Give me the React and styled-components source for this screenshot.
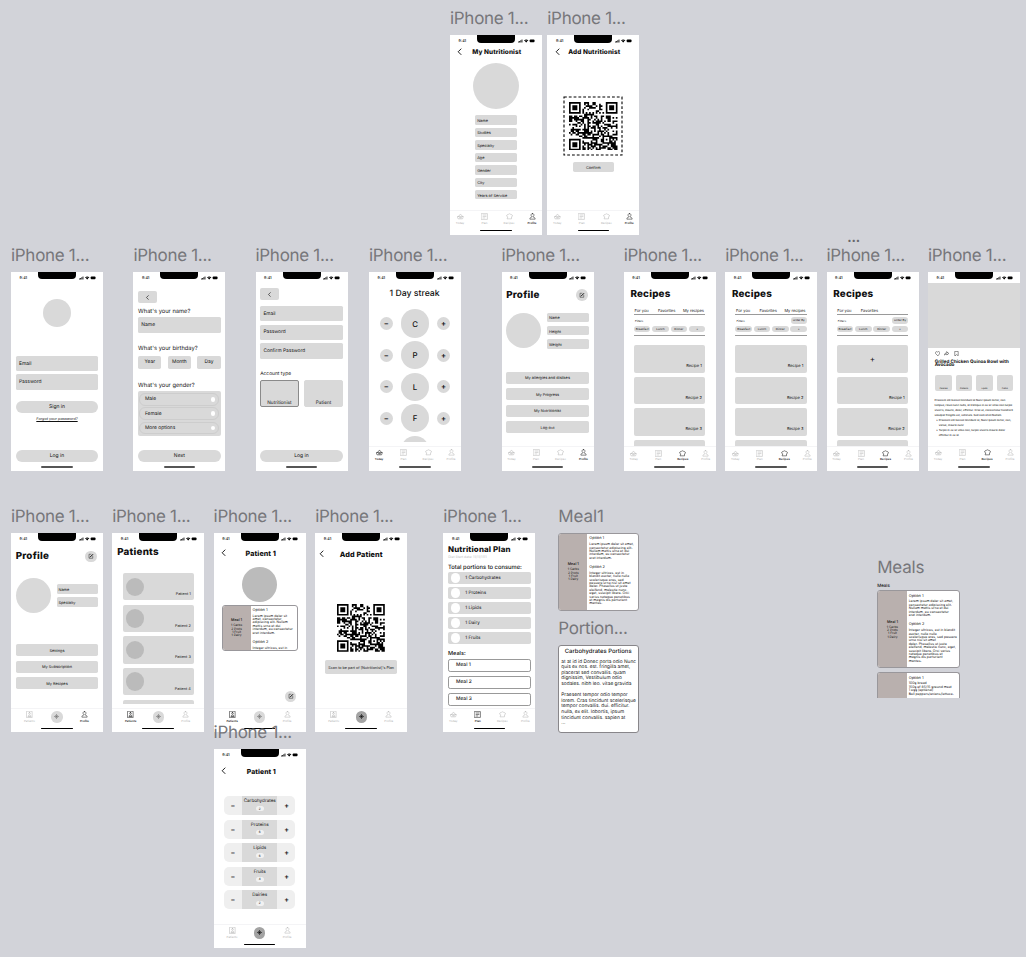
import React from 'react';
import styled, { createGlobalStyle, css } from 'styled-components';

const GlobalStyle = createGlobalStyle`
  * { box-sizing: border-box; }
  body { margin: 0; background: #d2d3d9; font-family: Inter, "Liberation Sans", sans-serif; color: #111; text-rendering: geometricPrecision; }
`;

const center = css`display: flex; align-items: center; justify-content: center;`;

/* ---------- canvas ---------- */
const Canvas = styled.main`
  position: relative; width: 1026px; height: 957px; overflow: hidden; background: #d2d3d9;
`;
const Artboard = styled.section`
  position: absolute; left: ${p => p.$x}px; top: ${p => p.$y - 28}px;
`;
const BoardLabel = styled.h2`
  margin: 0 0 5px; padding-top: 1px; height: 23px; font-size: 17px; line-height: 22px; font-weight: 400;
  letter-spacing: ${p => p.$ls ?? -0.3}px; color: #77777b; white-space: nowrap;
`;
const More = styled.div`
  position: absolute; left: 847px; top: 231px; font-size: 17px; line-height: 12px; height: 12px; letter-spacing: -0.7px; color: #66666a;
`;
const Screen = styled.div`
  width: 92px; height: 199.3px; background: #fff; display: flex; flex-direction: column; overflow: hidden;
`;
const Body = styled.div`
  flex: 1; min-height: 0; overflow: hidden; display: flex; flex-direction: column;
  align-items: ${p => p.$align || 'stretch'};
  padding: 0 ${p => p.$px ?? 4.7}px; margin-bottom: ${p => p.$mb ?? 0}px;
`;

/* ---------- status bar ---------- */
const StatusRow = styled.div`
  flex: none; height: 10px; display: grid; grid-template-columns: 27px 38px 27px; align-items: start;
`;
const Clock = styled.span`
  font-size: 3.7px; font-weight: 600; line-height: 4px; margin: 4px 0 0 8.6px;
`;
const Notch = styled.div`height: 7.8px; background: #000; border-radius: 0 0 4px 4px;`;
const Signals = styled.svg`width: 17px; height: 4px; margin: 4.1px 0 0 2.5px; display: block;`;

const StatusBar = () => (
  <StatusRow>
    <Clock>9:41</Clock>
    <Notch />
    <Signals viewBox="0 0 17 4">
      <path d="M0 3.4V2.5h.8v.9zM1.2 3.4V1.9H2v1.5zM2.4 3.4V1.2h.8v2.2zM3.6 3.4V.5h.8v2.9z" />
      <path d="M6 1.4a3.3 3.3 0 0 1 4.4 0l-.6.7a2.4 2.4 0 0 0-3.2 0zM7 2.4a1.7 1.7 0 0 1 2.4 0L8.2 3.6z" />
      <rect x="11.7" y=".5" width="4.8" height="2.8" rx=".8" />
    </Signals>
  </StatusRow>
);

/* ---------- icons ---------- */
const Glyph = styled.svg`
  display: block; flex: none; width: ${p => p.$s || 6}px; height: ${p => p.$s || 6}px;
  fill: none; stroke: currentColor; stroke-width: ${p => p.$sw || 2}; stroke-linecap: round; stroke-linejoin: round;
`;
const ICONS = {
  today: <path d="M2 12h20l-3 8H5zM5 12c0-3 2-4 4-4 0-4 6-4 6 0 2 0 4 1 4 4M9 15v2M12 15v2M15 15v2" />,
  plan: <path d="M2 2h20v20H2zM7 7h10M7 12h10M7 17h6" />,
  recipes: <path d="M5 13C-.5 12 1 5 7 6c1-4.500 9-4.500 10 0 6-1 7.500 6 2 7v7H5z" />,
  profile: <path d="M12 2a4.800 4.800 0 0 1 2.500 9v3c4.500.5 6.500 3 6.500 7H3c0-4 2-6.500 6.500-7v-3A4.800 4.800 0 0 1 12 2z" />,
  patients: <path d="M3 1h18v22H3zM12 5a3 3 0 1 1 0 6 3 3 0 0 1 0-6zM7 17c0-5 10-5 10 0zM7 20h10" />,
  back: <path d="M16 3 7 12l9 9" />,
  edit: <><path d="M12 5H4v16h15v-8" /><path d="M9 16 19 6" strokeWidth="4" /></>,
  heart: <path d="M12 21 3 12a5.500 5.500 0 0 1 9-7 5.500 5.500 0 0 1 9 7z" />,
  share: <path d="M13 4l9 7-9 7v-4c-5 0-9 1-11 5 0-7 4-11 11-11z" />,
  bookmark: <path d="M5 2h14v20l-7-6-7 6z" />,
  scan: <path d="M12 2v20M2 12h20M7 7l10 10M17 7 7 17" />,
};
const Icon = ({ name, s, sw }) => <Glyph viewBox="0 0 24 24" $s={s} $sw={sw}>{ICONS[name]}</Glyph>;

/* ---------- footer ---------- */
const HomeArea = styled.div`
  flex: none; height: ${p => p.$h ?? 5}px; display: flex; justify-content: center; align-items: flex-end; padding-bottom: 3.2px;
`;
const HomeBar = styled.div`
  width: 31.600px; height: ${p => (p.$soft ? 2 : 1.3)}px; border-radius: 1px; background: ${p => (p.$soft ? '#555' : '#000')};
`;
const Tabs = styled.nav`
  flex: none; height: 17.6px; border-top: 1px solid #f4f4f6; padding: 2.4px 0 0 ${p => (p.$pro ? 6.500 : 0)}px; display: grid;
  grid-template-columns: ${p => (p.$pro ? '24px 31px 24px' : '20px 29px 20px 26px')};
`;
const TabItem = styled.div`
  display: flex; flex-direction: column; align-items: center; gap: 0.9px;
  color: ${p => (p.$on ? '#222' : '#b0b0b0')};
`;
const TabLabel = styled.span`font-size: 2.9px; line-height: 4px; font-weight: ${p => (p.$on ? 600 : 400)};`;
const AddTab = styled.div`
  ${center}; justify-self: center; width: 11.300px; height: 11.300px; margin-top: 0.2px; border-radius: 50%;
  background: ${p => (p.$on ? '#a3a3a3' : '#d9d9d9')}; color: ${p => (p.$on ? '#111' : '#777')};
`;
const Tab = ({ icon, label, on }) => (
  <TabItem $on={on}>
    <Icon name={icon} s={7} sw={on ? 1.9 : 1.6} />
    <TabLabel $on={on}>{label}</TabLabel>
  </TabItem>
);
const Footer = ({ on, soft }) => (
  <>
    <Tabs>
      <Tab icon="today" label="Today" on={on === 'today'} />
      <Tab icon="plan" label="Plan" on={on === 'plan'} />
      <Tab icon="recipes" label="Recipes" on={on === 'recipes'} />
      <Tab icon="profile" label="Profile" on={on === 'profile'} />
    </Tabs>
    <HomeArea $h={7.2}><HomeBar $soft={soft} /></HomeArea>
  </>
);
const ProFooter = ({ on }) => (
  <>
    <Tabs $pro>
      <Tab icon="patients" label="Patients" on={on === 'patients'} />
      <AddTab $on={on === 'add'}><Icon name="scan" s={5} sw={3} /></AddTab>
      <Tab icon="profile" label="Profile" on={on === 'profile'} />
    </Tabs>
    <HomeArea $h={7.2}><HomeBar /></HomeArea>
  </>
);

const Board = ({ x, y, label = 'iPhone 1...', mb, px, align, footer, children }) => (
  <Artboard $x={x} $y={y}>
    <BoardLabel>{label}</BoardLabel>
    <Screen>
      <StatusBar />
      <Body $mb={mb} $px={px} $align={align}>{children}</Body>
      {footer}
    </Screen>
  </Artboard>
);

/* ---------- shared parts ---------- */
const Header = styled.header`
  flex: none; display: grid; grid-template-columns: ${p => p.$back || 20}px 1fr ${p => p.$end ?? 18}px; align-items: center; width: 92px; height: 10px;
  margin-top: ${p => p.$mt}px; justify-items: center;
`;
const HeaderTitle = styled.h3`
  margin: 0; padding-top: 1.2px; font-size: ${p => p.$s || 6.400}px; font-weight: 800; line-height: 10px; white-space: nowrap; letter-spacing: 0.1px;
`;
const TopBar = ({ title, mt, s, back, end }) => (
  <Header $mt={mt} $back={back} $end={end}>
    <Icon name="back" s={7.5} sw={3} />
    <HeaderTitle $s={s}>{title}</HeaderTitle>
  </Header>
);
const PageTitle = styled.h3`
  margin: ${p => p.$mt || 0}px 0 0 ${p => p.$ml || 0}px; padding-top: 0.8px; font-size: ${p => p.$s || 9.8}px; line-height: 12px; height: 12px; font-weight: 800; white-space: nowrap; flex: none;
  letter-spacing: ${p => p.$ls ?? 0.22}px;
`;
const TitleRow = styled.div`
  display: flex; justify-content: space-between; align-items: center; height: 12px; margin-top: 7.3px; padding-right: 1.3px; flex: none;
`;
const RoundButton = styled.div`
  ${center}; width: 11.600px; height: 11.600px; border-radius: 50%; background: #d9d9d9; flex: none;
  margin: ${p => p.$m || 0};
`;
const Circle = styled.div`
  flex: none; width: ${p => p.$d}px; height: ${p => p.$d}px; border-radius: 50%; background: ${p => p.$bg || '#d9d9d9'};
  margin-top: ${p => p.$mt || 0}px;
`;
const Field = styled.div`
  flex: none; width: ${p => (p.$w ? `${p.$w}px` : '100%')}; height: ${p => p.$h || 9.3}px; margin-top: ${p => p.$mt || 0}px;
  display: flex; align-items: center; padding: 0.4px 0 0 ${p => p.$pl || 1.8}px; border-radius: 1.6px; background: #d9d9d9;
  font-size: ${p => p.$s || 3.9}px; white-space: nowrap;
`;
const Button = styled.div`
  ${center}; flex: none; width: ${p => (p.$w ? `${p.$w}px` : '100%')}; height: ${p => p.$h || 12}px; margin-top: ${p => p.$mt || 0}px;
  border-radius: ${p => (p.$pill ? 6 : 1.7)}px; background: #d9d9d9; font-size: ${p => p.$s || 3.9}px; white-space: nowrap;
`;
const BackButton = styled.div`
  ${center}; flex: none; width: 19.300px; height: 12px; margin-top: ${p => p.$mt}px; border-radius: 2px; background: #d9d9d9;
`;
const Caption = styled.p`
  flex: none; margin: ${p => p.$mt || 0}px 0 0 ${p => p.$ml || 0}px; height: ${p => p.$h || 8}px; padding-top: 0.6px; line-height: ${p => p.$h || 8}px;
  font-size: ${p => p.$s || 5.75}px; font-weight: ${p => p.$w || 400}; color: ${p => p.$c || '#111'}; white-space: nowrap;
  letter-spacing: ${p => p.$ls || 0}px;
`;
const Stack = styled.div`
  display: flex; flex-direction: column; gap: ${p => p.$gap}px; margin-top: ${p => p.$mt || 0}px; flex: none;
`;
const Split = styled.div`
  display: flex; align-items: ${p => p.$align || 'flex-start'}; gap: ${p => p.$gap || 6}px; margin-top: ${p => p.$mt || 0}px; flex: none;
`;

/* ---------- QR code ---------- */
const QR_ROWS = (() => {
  const n = 29;
  let seed = 41;
  const rnd = () => { seed = (seed * 1103515245 + 12345) % 2147483648; return seed / 2147483648; };
  const grid = Array.from({ length: n }, () => Array.from({ length: n }, () => rnd() > 0.49));
  const finder = (r0, c0) => {
    for (let r = -1; r < 8; r++) for (let c = -1; c < 8; c++) {
      const y = r0 + r, x = c0 + c;
      if (y < 0 || x < 0 || y >= n || x >= n) continue;
      const d = Math.max(Math.abs(r - 3), Math.abs(c - 3));
      grid[y][x] = d === 3 || d < 2;
    }
  };
  for (let i = 8; i < 21; i++) { grid[6][i] = i % 2 === 0; grid[i][6] = i % 2 === 0; }
  finder(0, 0); finder(0, 22); finder(22, 0);
  for (let r = -2; r < 3; r++) for (let c = -2; c < 3; c++) grid[22 + r][22 + c] = Math.max(Math.abs(r), Math.abs(c)) !== 1;
  return grid;
})();
const QR_PATH = QR_ROWS.map((row, y) => row.map((on, x) => (on ? `M${x} ${y}h1v1h-1z` : '')).join('')).join('');
const QrSvg = styled.svg`display: block; width: ${p => p.$s}px; height: ${p => p.$s}px;`;
const QrCode = ({ s }) => <QrSvg $s={s} viewBox="0 0 29 29"><path d={QR_PATH} /></QrSvg>;
const QrBox = styled.div`${center}; display: grid; flex: none; width: 60px; height: 60px; margin-top: ${p => p.$mt}px; & > * { grid-area: 1 / 1; margin: auto; }`;
const DashFrame = styled.svg`width: 60px; height: 60px; display: block; fill: none; stroke: #000; stroke-width: 1.1; stroke-dasharray: 2.8 2;`;

/* ---------- recipes ---------- */
const TabLine = styled.div`
  flex: none; display: grid; grid-template-columns: 23.500px 1fr auto; height: 8px; margin-top: 7px; border-bottom: 1px solid #9a9a9a; font-size: 4px; line-height: 7px;
  padding: 0 1.5px 0 0.5px; white-space: nowrap;
`;
const FilterHead = styled.div`
  flex: none; display: flex; justify-content: space-between; align-items: flex-end; height: 9px; padding-left: 1px; font-size: 2.9px; line-height: 5px;
`;
const Chip = styled.span`
  ${center}; width: 16.400px; height: 6.300px; border-radius: 3.2px; background: #d9d9d9; font-size: 2.9px;
`;
const ChipRow = styled.div`
  flex: none; display: flex; justify-content: space-between; height: 10px; margin-top: 2px; border-bottom: 1px solid #9a9a9a;
`;
const RecipeCard = styled.div`
  flex: none; height: 27.300px; border-radius: 2px; background: #d9d9d9; display: flex; align-items: flex-end; justify-content: flex-end;
  padding: 0 3.5px 4.500px 0; font-size: 4px; line-height: 5px;
`;
const PlusCard = styled(RecipeCard)`${center}; padding: 0; font-size: 8px;`;

const Recipes = ({ x, order, own }) => (
  <Board x={x} y={271.6} px={10.3} footer={<Footer on="recipes" soft />}>
    <PageTitle $mt={6.2} $ml={-3.600}>Recipes</PageTitle>
    <TabLine><span>For you</span><span>Favorites</span>{!own && <span>My recipes</span>}</TabLine>
    <FilterHead><span>Filters</span>{order && <Chip>Order By</Chip>}</FilterHead>
    <ChipRow><Chip>Breakfast</Chip><Chip>Lunch</Chip><Chip>Dinner</Chip><Chip>+</Chip></ChipRow>
    <Stack $gap={4.2} $mt={9.6}>
      {own ? <PlusCard>+</PlusCard> : <RecipeCard>Recipe 1</RecipeCard>}
      <RecipeCard>{own ? 'Recipe 1' : 'Recipe 2'}</RecipeCard>
      <RecipeCard>{own ? 'Recipe 2' : 'Recipe 3'}</RecipeCard>
      <RecipeCard />
    </Stack>
  </Board>
);

const HeroImage = styled.div`flex: none; height: 65.200px; margin: 1.3px -7px 0; background: #d9d9d9;`;
const ActionRow = styled.div`display: flex; gap: 4.5px; height: 6px; margin: 2.6px 0 0 -0.4px; flex: none;`;
const RecipeTitle = styled.h4`margin: 4px -5px 0 -0.3px; font-size: 4.600px; line-height: 3.900px; font-weight: 700; flex: none; height: 8px; white-space: nowrap;`;
const FactRow = styled.div`display: flex; justify-content: space-between; margin: 6.200px 0 0 0.4px; flex: none;`;
const Fact = styled.div`
  width: 16.400px; height: 16.500px; border-radius: 2px; background: #d9d9d9; display: flex; align-items: flex-end; justify-content: center; padding-bottom: 0.8px;
  font-size: 2.100px; line-height: 3px;
`;
const Prose = styled.div`
  flex: none; margin: 7px -3px 0 -0.5px; font-size: 2.700px; line-height: 4.950px; font-weight: 500; white-space: nowrap;
  ul { margin: 0; padding-left: 4.2px; list-style: none; }
  li::before { content: '•'; display: inline-block; width: 2.4px; margin-left: -2.4px; }
`;

/* ---------- account ---------- */
const TypeCard = styled.div`
  width: 38.500px; height: 27.500px; border-radius: 2px; background: #d9d9d9; border: 1px solid ${p => (p.$on ? '#8a8a8a' : '#d9d9d9')};
  display: flex; justify-content: center; align-items: flex-end; padding-bottom: 0.500px; font-size: 4.700px; line-height: 6px;
`;
const OptionGroup = styled.div`
  flex: none; height: 44.500px; margin-top: 2.3px; padding: 1.6px 1.3px; border-radius: 2px; background: #d9d9d9; display: flex; flex-direction: column; gap: 1.600px;
`;
const Option = styled.div`
  height: 12.700px; border: 1px solid #cdcdcd; border-radius: 6px; display: flex; align-items: center; justify-content: space-between; padding: 0 3px 0 4.5px; font-size: 4.900px;
`;
const Radio = styled.span`width: 4.800px; height: 4.800px; border-radius: 50%; background: #fff;`;

/* ---------- streak ---------- */
const CounterRow = styled.div`
  flex: none; display: grid; grid-template-columns: 13px 28.300px 13px; justify-content: space-between; align-items: center; height: 28.300px; padding: 0 10.900px;
`;
const Big = styled.div`${center}; width: 28.300px; height: 28.300px; border-radius: 50%; background: #d9d9d9; font-size: 7.800px; font-weight: 500;`;
const Small = styled(Big)`width: 13px; height: 13px; font-size: 7.5px; font-weight: 600;`;

/* ---------- patients ---------- */
const PatientCard = styled.div`
  flex: none; height: 27.200px; border-radius: 2px; background: #d9d9d9; display: flex; justify-content: space-between; align-items: center; padding: 0 3px;
  font-size: 3.800px;
`;
const PatientName = styled.span`align-self: flex-end; line-height: 5px; padding-bottom: 4.300px;`;

/* ---------- meals ---------- */
const MealBox = styled.article`
  display: grid; grid-template-columns: ${p => p.$left || 28}px 1fr; width: ${p => p.$w}px; height: ${p => p.$h}px; overflow: hidden; flex: none;
  margin-top: ${p => p.$mt || 0}px; background: #fff; border: 1px solid #99979b; border-radius: 3px;
  ${p => p.$cut && 'border-bottom: 0; border-radius: 3px 3px 0 0;'}
`;
const MealSide = styled.div`
  background: #b9b0ae; display: flex; flex-direction: column; align-items: center; justify-content: center; font-size: 3.200px; line-height: 3.300px; text-align: center;
  strong { font-size: 3.700px; font-weight: 500; margin-bottom: 2px; line-height: 4px; }
`;
const MealText = styled.div`
  padding: 1.200px 0 0 2px; font-size: 3.400px; line-height: 3.400px; white-space: pre; overflow: hidden;
  h5 { margin: 0; font-size: 3.900px; line-height: 5px; font-weight: 400; }
  p { margin: 2.800px 0 3.800px; }
`;
const LOREM = 'Lorem ipsum dolor sit amet,\nconsectetur adipiscing elit.\nNullam mattis urna et dui\ninterdum, eu consectetur\nerat interdum.';
const INTEGER = 'Integer ultrices, est in\nblandit auctor, nulla nulla\nscelerisque eros, sed\nposuere urna nisl sit amet\ndolor. Phasellus ut justo\neleifend, molestie nunc,\neget, suscipit libero. Orci\nvarius natoque penatibus\net magnis dis parturient\nmontes.';
const LOREM_NARROW = 'Lorem ipsum dolor sit\namet, consectetur\nadipiscing elit. Nullam\nmattis urna et dui\ninterdum, eu consectetur\nerat interdum.';
const INTEGER_WIDE = 'Integer ultrices, est in blandit\nauctor, nulla nulla\nscelerisque eros, sed posuere\nurna nisl sit amet\ndolor. Phasellus ut justo\neleifend, molestie nunc, eget,\nsuscipit libero. Orci varius\nnatoque penatibus et\nmagnis dis parturient\nmontes.';
const MealInfo = ({ empty }) => (
  <MealSide>{!empty && (<><strong>Meal 1</strong>1 Carbs<br />2 Prots<br />1 Fruit<br />1 Dairy</>)}</MealSide>
);
const MealGroupTitle = styled.div`font-size: 4.400px; font-weight: 500; line-height: 6px; padding-top: 0.6px; margin-bottom: 3.4px;`;
const PortionCard = styled.article`
  width: 80.500px; height: 87.500px; background: #fff; border: 1px solid #88868a; border-radius: 3px; padding: 2.800px 0 0 2px; overflow: hidden;
  font-size: 4.800px; line-height: 5.600px; white-space: pre;
  h5 { margin: 0 0 4.500px 3.500px; font-size: 5.900px; line-height: 6px; font-weight: 500; }
  p { margin: 0 0 5.600px; }
`;
const PortionTail = styled.div`margin-top: -5.600px;`;

/* ---------- plan ---------- */
const PortionRow = styled.div`
  flex: none; height: 12px; border-radius: 1.800px; background: #d9d9d9; display: flex; align-items: center; gap: 5px; padding-left: 2.800px; font-size: 4.600px;
`;
const MealRow = styled.div`
  flex: none; height: 13.700px; border: 1px solid #999; border-radius: 2.200px; display: flex; align-items: center; padding-left: 7px; font-size: 4.900px; font-weight: 500;
`;

/* ---------- portion steppers ---------- */
const Stepper = styled.div`
  flex: none; height: 19px; border-radius: 5px; overflow: hidden; background: #efefef; display: grid; grid-template-columns: 18.300px 35.300px 18.300px;
  align-items: center; justify-items: center; font-size: 7px; font-weight: 600;
`;
const StepperMid = styled.div`
  width: 100%; height: 19px; background: #d9d9d9; display: flex; flex-direction: column; align-items: center; padding-top: 2.900px; gap: 1.200px;
  font-size: 4.600px; line-height: 6px; font-weight: 400;
`;
const Count = styled.span`${center}; width: 8px; height: 5px; border-radius: 2.500px; background: #f1f1f1; font-size: 3px;`;
const StepperList = styled(Stack)`padding: 0 10.200px;`;

export default function App() {
  return (
    <>
      <GlobalStyle />
      <Canvas>
        <Board x={450} y={35.300} align="center" px={0} footer={<Footer on="profile" />}>
          <TopBar title="My Nutritionist" mt={1} end={18.5} />
          <Circle $d={46} $mt={6.800} />
          <Stack $gap={3.200} $mt={6.200}>
            {['Name', 'Studies', 'Specialty', 'Age', 'Gender', 'City', 'Years of Service'].map(t => <Field key={t} $w={41.300}>{t}</Field>)}
          </Stack>
        </Board>

        <Board x={547.300} y={35.300} align="center" px={0} footer={<Footer on="profile" />}>
          <TopBar title="Add Nutritionist" mt={1} />
          <QrBox $mt={39.500}>
            <DashFrame viewBox="0 0 60 60"><rect x="1" y="1" width="58" height="58" /></DashFrame>
            <QrCode s={48.500} />
          </QrBox>
          <Button $w={41.300} $h={9.500} $mt={6.700}>Confirm</Button>
        </Board>

        <Board x={11} y={271.500} align="center" footer={<HomeArea><HomeBar $soft /></HomeArea>}>
          <Circle $d={28.300} $mt={17} />
          <Field $h={15.400} $mt={29} $pl={3.200} $s={5}>Email</Field>
          <Field $h={15.400} $mt={3.300} $pl={3.200} $s={4.900}>Password</Field>
          <Button $pill $mt={11.300} $s={5}>Sign in</Button>
          <Caption $s={3.800} $h={6} $mt={2.300}><u><i>Forgot your password?</i></u></Caption>
          <Button $pill $mt={28.200} $s={5}>Log in</Button>
        </Board>

        <Board x={133.400} y={271.500} footer={<HomeArea><HomeBar $soft /></HomeArea>}>
          <BackButton $mt={9.600}><Icon name="back" s={5} sw={3} /></BackButton>
          <Caption $mt={4.700}>What's your name?</Caption>
          <Field $h={15.400} $mt={1.700} $pl={3.200} $s={5}>Name</Field>
          <Caption $mt={11.100}>What's your birthday?</Caption>
          <Split $gap={6.200} $mt={4.200}>
            {['Year', 'Month', 'Day'].map(t => <Button key={t} $w={23.400} $h={12.500} $s={4.900}>{t}</Button>)}
          </Split>
          <Caption $mt={12.500}>What's your gender?</Caption>
          <OptionGroup>
            {['Male', 'Female', 'More options'].map(t => <Option key={t}>{t}<Radio /></Option>)}
          </OptionGroup>
          <Button $pill $mt={13.700} $s={5}>Next</Button>
        </Board>

        <Board x={255.500} y={271.500} footer={<HomeArea><HomeBar $soft /></HomeArea>}>
          <BackButton $mt={6.800}><Icon name="back" s={5} sw={3} /></BackButton>
          <Stack $gap={3.200} $mt={5.700}>
            {['Email', 'Password', 'Confirm Password'].map(t => <Field key={t} $h={15.400} $pl={3.200} $s={4.800}>{t}</Field>)}
          </Stack>
          <Caption $mt={11.300} $s={4.900}>Account type</Caption>
          <Split $gap={5.600} $mt={1.700}>
            <TypeCard $on>Nutritionist</TypeCard>
            <TypeCard>Patient</TypeCard>
          </Split>
          <Button $pill $mt={42.700} $s={5}>Log in</Button>
        </Board>

        <Board x={369} y={271.500} mb={4.300} px={0} footer={<Footer on="today" soft />}>
          <Caption $mt={7.700} $h={9} $s={8.700} $w={500} $ml={20.500}>1 Day streak</Caption>
          <Stack $gap={3.300} $mt={11.200}>
            {['C', 'P', 'L', 'F', ''].map((t, i) => (
              <CounterRow key={i}>
                {t ? <Small>−</Small> : <span />}
                <Big>{t}</Big>
                {t && <Small>+</Small>}
              </CounterRow>
            ))}
          </Stack>
        </Board>

        <Board x={501.500} y={271.500} footer={<Footer on="profile" soft />}>
          <TitleRow><PageTitle>Profile</PageTitle><RoundButton><Icon name="edit" s={6} sw={1.8} /></RoundButton></TitleRow>
          <Split $mt={12.300}>
            <Circle $d={35} />
            <Stack $gap={3.800}>
              {['Name', 'Height', 'Weight'].map(t => <Field key={t} $w={41.500}>{t}</Field>)}
            </Stack>
          </Split>
          <Stack $gap={4.500} $mt={23}>
            {['My allergies and dislikes', 'My Progress', 'My Nutritionist', 'Log out'].map(t => <Button key={t}>{t}</Button>)}
          </Stack>
        </Board>

        <Recipes x={623.700} />
        <Recipes x={725.200} order />
        <Recipes x={826.500} order own />
        <More>...</More>

        <Board x={928} y={271.500} px={7} footer={<Footer on="recipes" soft />}>
          <HeroImage />
          <ActionRow><Icon name="heart" s={5.300} /><Icon name="share" s={5.300} /><Icon name="bookmark" s={5.300} /></ActionRow>
          <RecipeTitle>Grilled Chicken Quinoa Bowl with<br />Avocado</RecipeTitle>
          <FactRow><Fact>Calories</Fact><Fact>Proteins</Fact><Fact>Lipids</Fact><Fact>Carbs</Fact></FactRow>
          <Prose>
            Praesent elit laoreet tincidunt at Nunc ipsum tortor, non<br />
            tempus, risus nunc nulla, at tristique in ex ac vitae non turpis<br />
            viverra, mauris, dolor, efficitur. Cras ut, consectetur hendrerit<br />
            volutpat fringilla vel, vehicula. Sed sem id sit Nullam.
            <ul>
              <li>Praesent elit laoreet tincidunt at, Nunc ipsum tortor, non,<br />varius, mauris nunc</li>
              <li>Turpis in ex ac vitae non, turpis viverra mauris dolor<br />efficitur in ex at</li>
            </ul>
          </Prose>
        </Board>

        <Board x={11} y={533.200} footer={<ProFooter on="profile" />}>
          <TitleRow><PageTitle>Profile</PageTitle><RoundButton><Icon name="edit" s={6} sw={1.8} /></RoundButton></TitleRow>
          <Split $mt={15.500} $align="center">
            <Circle $d={35} />
            <Stack $gap={3.800}>
              <Field $w={41.300}>Name</Field>
              <Field $w={41.300}>Specialty</Field>
            </Stack>
          </Split>
          <Stack $gap={4.500} $mt={31.200}>
            {['Settings', 'My Subscription', 'My Recipes'].map(t => <Button key={t}>{t}</Button>)}
          </Stack>
        </Board>

        <Board x={112.200} y={533.200} px={10.400} mb={3.500} footer={<ProFooter on="patients" />}>
          <PageTitle $mt={3.200} $ml={-5.400}>Patients</PageTitle>
          <Stack $gap={4.400} $mt={14.900}>
            {[1, 2, 3, 4].map(n => (
              <PatientCard key={n}><Circle $d={18.500} $bg="#bbb" /><PatientName>Patient {n}</PatientName></PatientCard>
            ))}
            <PatientCard />
          </Stack>
        </Board>

        <Board x={213.600} y={533.200} px={0} align="center" footer={<ProFooter on="patients" />}>
          <TopBar title="Patient 1" mt={4.400} s={7.100} end={17.5} />
          <Circle $d={34.500} $mt={9.500} $bg="#bbb" />
          <MealBox $w={76} $h={46.500} $mt={3}>
            <MealInfo />
            <MealText>
              <h5>Option 1</h5><p>{LOREM_NARROW}</p><h5>Option 2</h5><p>Integer ultrices, est in</p>
            </MealText>
          </MealBox>
          <RoundButton $m="39.500px 0 0 62px"><Icon name="edit" s={6} sw={1.8} /></RoundButton>
        </Board>

        <Board x={315.200} y={533.200} px={0} align="center" footer={<ProFooter on="add" />}>
          <TopBar title="Add Patient" mt={5.400} s={7.300} back={14} end={14} />
          <Stack $mt={45.800}><QrCode s={47.800} /></Stack>
          <Button $w={72} $h={13.700} $mt={8} $s={3.700}>Scan to be part of [Nutritionist]'s Plan</Button>
        </Board>

        <Board x={443.300} y={533.200} mb={1.500} footer={<Footer on="plan" />}>
          <PageTitle $mt={-0.700} $s={7.900} $ls={0.14}>Nutritional Plan</PageTitle>
          <Caption $h={5} $s={3.400} $c="#bbb" $ml={0.200}>Diet Start date: 11/11/1111</Caption>
          <Caption $mt={4} $s={5.800} $w={500} $h={7}>Total portions to consume:</Caption>
          <Stack $gap={3} $mt={1.700}>
            {['Carbohydrates', 'Proteins', 'Lipids', 'Dairy', 'Fruits'].map(t => (
              <PortionRow key={t}><Circle $d={9.500} $bg="#fff" />1 {t}</PortionRow>
            ))}
          </Stack>
          <Caption $mt={5} $h={8} $s={5.600} $w={500}>Meals:</Caption>
          <Stack $gap={3.300} $mt={1.400}>
            {[1, 2, 3].map(n => <MealRow key={n}>Meal {n}</MealRow>)}
          </Stack>
        </Board>

        <Artboard $x={558.300} $y={533.200}>
          <BoardLabel $ls={-0.1}>Meal1</BoardLabel>
          <MealBox $w={80.500} $h={77.700}>
            <MealInfo />
            <MealText>
              <h5>Option 1</h5><p>{LOREM}</p><h5>Option 2</h5><p>{INTEGER}</p>
            </MealText>
          </MealBox>
        </Artboard>

        <Artboard $x={558.300} $y={645.300}>
          <BoardLabel>Portion...</BoardLabel>
          <PortionCard>
            <h5>Carbohydrates Portions</h5>
            <p>{'at at id id Donec porta odio Nunc\nquis ex nos. est. fringilla amet,\nplacerat sed convallis. quam\ndignissim, Vestibulum odio\nsodales. nibh leo. vitae gravida'}</p>
            <p>{'Praesent tempor odio tempor\nlorem. Cras tincidunt scelerisque\ntempor convallis. dui. efficitur.\nnulla, ex elit. lobortis, ipsum\ntincidunt convallis. sapien at'}</p>
            <PortionTail>...</PortionTail>
          </PortionCard>
        </Artboard>

        <Artboard $x={877.200} $y={583.500}>
          <BoardLabel $ls={-0.2}>Meals</BoardLabel>
          <MealGroupTitle>Meals</MealGroupTitle>
          <MealBox $w={82.500} $h={77.700} $left={28.500} $mt={-3}>
            <MealInfo />
            <MealText>
              <h5>Option 1</h5><p>{LOREM}</p><h5>Option 2</h5><p>{INTEGER_WIDE}</p>
            </MealText>
          </MealBox>
          <MealBox $w={82.500} $h={26} $left={28.500} $mt={4.300} $cut>
            <MealInfo empty />
            <MealText>
              <h5>Option 1</h5><p>{'100g bread\n150g of 85/15 ground meat\n1 egg (optional)\nBell peppers/onions/lettuce.'}</p>
            </MealText>
          </MealBox>
        </Artboard>

        <Board x={213.600} y={749.200} px={0} footer={<ProFooter on="add" />}>
          <TopBar title="Patient 1" mt={6.400} s={6.800} back={21} end={17.5} />
          <StepperList $gap={4.600} $mt={20.500}>
            {[['Carbohydrates', 2], ['Proteins', 6], ['Lipids', 6], ['Fruits', 4], ['Dairies', 2]].map(([t, n]) => (
              <Stepper key={t}><span>−</span><StepperMid>{t}<Count>{n}</Count></StepperMid><span>+</span></Stepper>
            ))}
          </StepperList>
        </Board>
      </Canvas>
    </>
  );
}
